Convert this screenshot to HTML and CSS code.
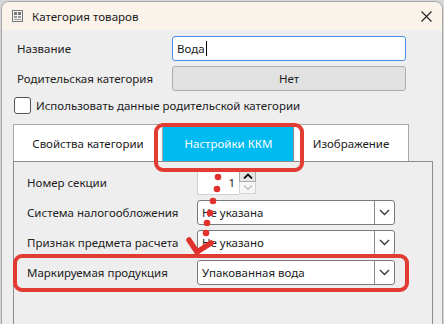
FILE: index.html
```html
<!DOCTYPE html>
<html lang="ru">
<head>
<meta charset="utf-8">
<link rel="stylesheet" href="styles.css">
</head>
<body>
<div class="window">
  <div class="titlebar">
    <svg class="app-icon" width="11" height="12" viewBox="0 0 11 12">
      <rect x="0.5" y="0.5" width="10" height="11" fill="#f4f4f4" stroke="#777"/>
      <rect x="2" y="2" width="3" height="3" fill="#777"/>
      <rect x="6" y="2" width="3" height="3" fill="#777"/>
      <rect x="2" y="6" width="3" height="2" fill="#999"/>
      <rect x="6" y="6" width="3" height="2" fill="#999"/>
      <rect x="2" y="9" width="7" height="1" fill="#999"/>
    </svg>
    <span class="title">Категория товаров</span>
    <svg class="close" width="11" height="11" viewBox="0 0 11 11">
      <path d="M0.5 0.5 L10.5 10.5 M10.5 0.5 L0.5 10.5" stroke="#222" stroke-width="1.1"/>
    </svg>
  </div>
  <div class="content">
    <div class="row">
      <span class="label">Название</span>
      <div class="textbox focused">Вода<span class="caret"></span></div>
    </div>
    <div class="row">
      <span class="label">Родительская категория</span>
      <div class="button">Нет</div>
    </div>
    <div class="check-row">
      <span class="checkbox"></span>
      <span class="check-text">Использовать данные родительской категории</span>
    </div>
    <div class="tabs">
      <div class="tab tab-first">Свойства категории</div>
      <div class="tab tab-active">Настройки ККМ</div>
      <div class="tab tab-last">Изображение</div>
    </div>
    <div class="panel">
      <div class="prow">
        <span class="plabel">Номер секции</span>
        <div class="spinner">
          <div class="spin-value">1</div>
          <div class="spin-buttons">
            <div class="spin-up"><svg width="10" height="6" viewBox="0 0 10 6"><path d="M1 5.5 L5 1.5 L9 5.5" fill="none" stroke="#111" stroke-width="1.8"/></svg></div>
            <div class="spin-down"><svg width="10" height="6" viewBox="0 0 10 6"><path d="M1 0.5 L5 4.5 L9 0.5" fill="none" stroke="#bdbdbd" stroke-width="1.4"/></svg></div>
          </div>
        </div>
      </div>
      <div class="prow">
        <span class="plabel">Система налогообложения</span>
        <div class="combo"><span class="combo-text">Не указана</span><span class="combo-btn"><svg width="11" height="7" viewBox="0 0 11 7"><path d="M1 1 L5.5 5.5 L10 1" fill="none" stroke="#333" stroke-width="1.3"/></svg></span></div>
      </div>
      <div class="prow">
        <span class="plabel">Признак предмета расчета</span>
        <div class="combo"><span class="combo-text">Не указано</span><span class="combo-btn"><svg width="11" height="7" viewBox="0 0 11 7"><path d="M1 1 L5.5 5.5 L10 1" fill="none" stroke="#333" stroke-width="1.3"/></svg></span></div>
      </div>
      <div class="prow">
        <span class="plabel">Маркируемая продукция</span>
        <div class="combo"><span class="combo-text">Упакованная вода</span><span class="combo-btn"><svg width="11" height="7" viewBox="0 0 11 7"><path d="M1 1 L5.5 5.5 L10 1" fill="none" stroke="#333" stroke-width="1.3"/></svg></span></div>
      </div>
    </div>
  </div>
</div>
<svg class="annotations" width="444" height="324" viewBox="0 0 444 324">
  <rect x="156" y="125" width="146" height="45" rx="7" fill="none" stroke="#e23b32" stroke-width="4"/>
  <rect x="15" y="256" width="392" height="34" rx="7" fill="none" stroke="#e23b32" stroke-width="4"/>
  <g fill="#e0312c">
    <circle cx="218" cy="177" r="3.3"/>
    <circle cx="217" cy="189" r="3.3"/>
    <circle cx="213" cy="201" r="3.3"/>
    <circle cx="210" cy="213" r="3.3"/>
    <circle cx="207" cy="223" r="3.3"/>
    <circle cx="206" cy="233" r="3.3"/>
  </g>
  <path d="M189 240 L197 252 L211 243" fill="none" stroke="#e0312c" stroke-width="5.5" stroke-linecap="round" stroke-linejoin="round"/>
</svg>
</body>
</html>
```

FILE: styles.css
```css
* { box-sizing: border-box; }
html, body { margin: 0; padding: 0; }
body {
  width: 444px;
  height: 324px;
  overflow: hidden;
  background: #d6d6d6;
  font-family: "Noto Sans", "Open Sans", sans-serif;
  font-size: 11.5px;
  color: #1b1b1b;
  position: relative;
}
.window {
  position: absolute;
  left: 1px;
  top: 1px;
  width: 442px;
  height: 330px;
  background: #eeeeee;
  border: 1px solid #a5a5a5;
  border-radius: 8px 8px 0 0;
  overflow: hidden;
}
.titlebar {
  height: 28px;
  background: #faf3ea;
  display: flex;
  align-items: center;
  padding-left: 10px;
  padding-right: 10px;
}
.app-icon { margin-right: 9px; }
.title { flex: 1; font-size: 11.6px; color: #1a1a1a; }
.content {
  padding: 6px 0 0 11px;
}
.row {
  display: flex;
  align-items: center;
  height: 25px;
  margin-bottom: 5px;
}
.label {
  width: 159px;
  padding-left: 4px;
  color: #222;
}
.textbox {
  width: 234px;
  height: 25px;
  background: #fff;
  border: 1px solid #7a7a7a;
  border-radius: 3px;
  padding-left: 4px;
  display: flex;
  align-items: center;
}
.textbox.focused { border-color: #4a90e2; }
.caret {
  display: inline-block;
  width: 1px;
  height: 15px;
  background: #000;
  margin-left: 1px;
}
.button {
  width: 234px;
  height: 25px;
  background: #e1e1e1;
  border: 1px solid #adadad;
  border-radius: 3px;
  display: flex;
  align-items: center;
  justify-content: center;
}
.check-row {
  display: flex;
  align-items: center;
  margin-top: 4px;
  height: 18px;
}
.checkbox {
  width: 17px;
  height: 17px;
  border: 1px solid #555;
  border-radius: 3px;
  background: #fff;
  margin-left: 1px;
  margin-right: 5px;
}
.tabs {
  display: flex;
  margin-top: 10px;
  height: 37px;
  align-items: flex-end;
}
.tab {
  height: 37px;
  display: flex;
  align-items: center;
  justify-content: center;
  background: #fff;
  border: 1px solid #a8a8a8;
  border-bottom: none;
}
.tab-first { width: 150px; }
.tab-active {
  width: 131px;
  background: #00baf2;
  color: #fff;
  border-color: #00baf2;
  border-right: 1px solid #8a8a8a;
}
.tab-last { width: 115px; border-left: none; }
.panel {
  width: 420px;
  height: 170px;
  border: 1px solid #8c8c8c;
  border-bottom: none;
  padding: 8px 0 0 13px;
}
.prow {
  display: flex;
  align-items: center;
  height: 25px;
  margin-bottom: 5px;
}
.plabel {
  width: 170px;
  color: #222;
}
.spinner {
  display: flex;
  height: 25px;
}
.spin-value {
  width: 42px;
  height: 25px;
  background: #fff;
  border: 1px solid #d0d0d0;
  border-right: none;
  text-align: right;
  padding-right: 4px;
  line-height: 23px;
}
.spin-buttons {
  width: 17px;
  display: flex;
  flex-direction: column;
}
.spin-up, .spin-down {
  height: 12px;
  display: flex;
  align-items: center;
  justify-content: center;
  border: 1px solid #acacac;
  background: #f0f0f0;
}
.spin-up { background: #e5e5e5; }
.spin-down { border-top: none; background: #f7f7f7; border-color: #d2d2d2; }
.combo {
  width: 198px;
  height: 25px;
  background: #fff;
  border: 1px solid #7a7a7a;
  border-radius: 3px;
  display: flex;
  align-items: center;
}
.combo-text {
  flex: 1;
  padding-left: 4px;
}
.combo-btn {
  width: 20px;
  height: 23px;
  border-left: 1px solid #8a8a8a;
  display: flex;
  align-items: center;
  justify-content: center;
}
.annotations {
  position: absolute;
  left: 0;
  top: 0;
  pointer-events: none;
}
```
